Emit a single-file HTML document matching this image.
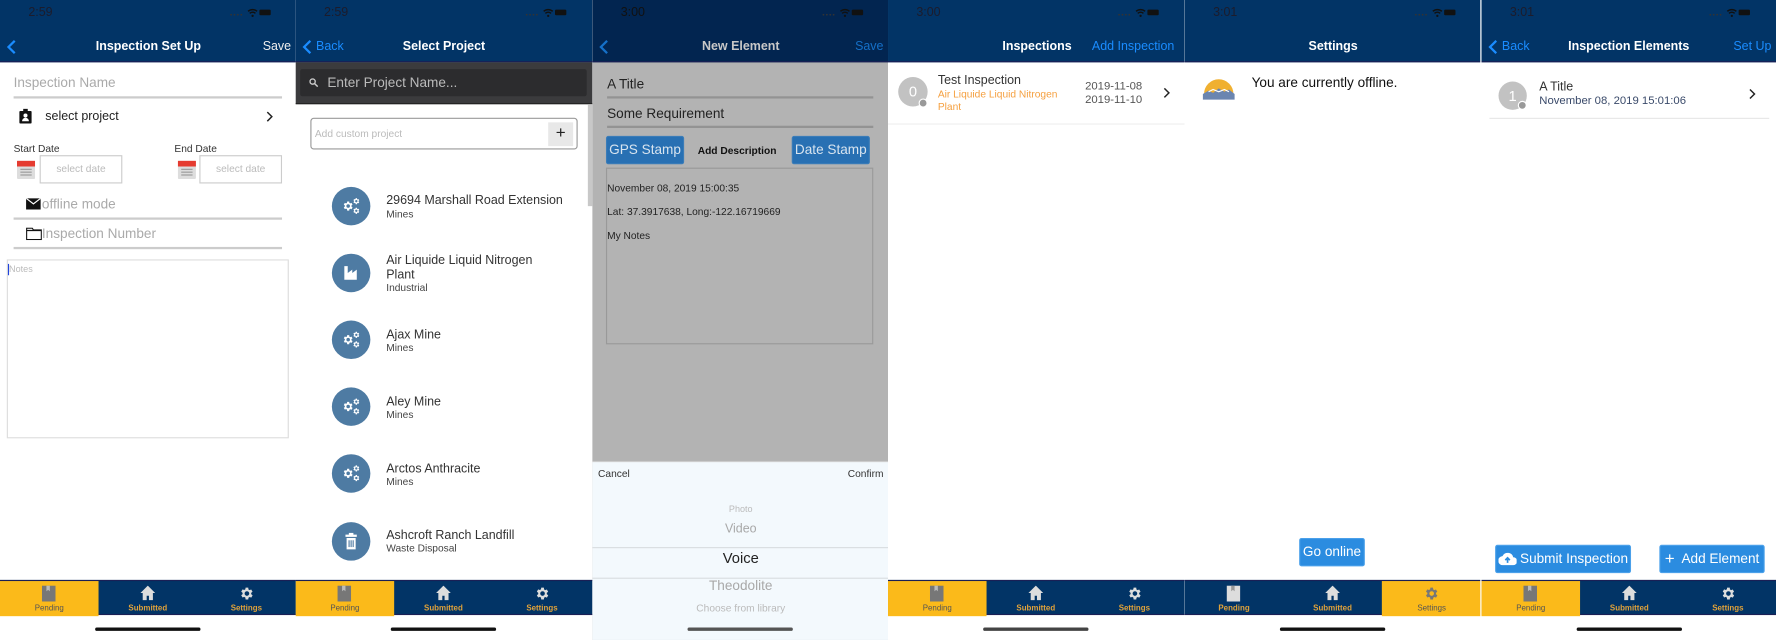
<!DOCTYPE html>
<html><head><meta charset="utf-8">
<style>
*{margin:0;padding:0;box-sizing:border-box}
html,body{width:1776px;height:640px;overflow:hidden;background:#fff}
#w{position:absolute;left:0;top:0;width:1568px;height:565px;transform:scale(1.13266);transform-origin:0 0;font-family:"Liberation Sans",sans-serif;}
.p{position:absolute;top:0;width:262px;height:565px;overflow:hidden;background:#fff}
.a{position:absolute;white-space:nowrap}
.hd{position:absolute;left:0;top:0;width:100%;height:55px;background:#023466;border-bottom:1.5px solid #1a1f55}
.tm{position:absolute;left:25px;top:5px;font-size:11px;color:#1c1c2c}
.sig{position:absolute;right:22px;top:7px;width:38px;height:8px}
.tt{position:absolute;top:35px;font-size:11px;font-weight:bold;color:#fff;width:100%;text-align:center;left:0}
.bl{color:#1a8cff;font-size:11px;position:absolute;top:35px}
.tab{position:absolute;left:0;top:512px;width:100%;height:31px;background:#023466;border-top:1px solid #1a1f55;border-bottom:1px solid #1a1f55}
.ti{position:absolute;top:0;width:87px;height:31px;text-align:center}
.ti svg{position:absolute;left:37px;top:4px}
.ti span{position:absolute;left:0;right:0;top:21px;font-size:7px;font-weight:bold;color:#e0a23a}
.ti.on{background:#fbba1a}
.ti.on span{color:#555;font-weight:normal}
.hi{position:absolute;top:554px;left:84px;width:93px;height:3px;border-radius:2px;background:#111}
.ci{position:absolute;width:34px;height:34px;border-radius:50%;background:#4e7ba3;left:32px}
.ci svg{position:absolute;left:9px;top:9px}
.t1{position:absolute;left:80px;font-size:11px;color:#333}
.t2{position:absolute;left:80px;font-size:9px;color:#444}
.btn{position:absolute;background:#2b8ce0;color:#fff;font-size:12px;border-radius:2px;text-align:center;border:1px solid #4aa0ea}
</style></head><body><div id="w">
<svg width="0" height="0" style="position:absolute"><defs>
<path id="g" d="M19.4 13a7.5 7.5 0 0 0 0-2l2.1-1.6-2-3.5-2.5 1a7.5 7.5 0 0 0-1.7-1L15 3h-4l-.4 2.7a7.5 7.5 0 0 0-1.7 1l-2.5-1-2 3.5L6.5 11a7.5 7.5 0 0 0 0 2l-2.1 1.6 2 3.5 2.5-1a7.5 7.5 0 0 0 1.7 1L11 21h4l.4-2.7a7.5 7.5 0 0 0 1.7-1l2.5 1 2-3.5zM13 15.5a3.5 3.5 0 1 1 0-7 3.5 3.5 0 0 1 0 7z" transform="translate(-1 0)"/>
</defs></svg>

<!-- PANEL 1 -->
<div class="p" style="left:0">
 <div class="hd"><div class="tm">2:59</div>
  <svg class="sig" viewBox="0 0 38 8"><circle cx="2" cy="6" r=".8" fill="#333"/><circle cx="5" cy="6" r=".8" fill="#333"/><circle cx="8" cy="6" r=".8" fill="#333"/><circle cx="11" cy="6" r=".8" fill="#333"/><path d="M17 3a6 6 0 0 1 8 0M18.5 4.8a3.5 3.5 0 0 1 5 0" stroke="#111" stroke-width="1.3" fill="none"/><circle cx="21" cy="7" r="1" fill="#111"/><rect x="27" y="1.5" width="10" height="5" rx="1" fill="#111"/></svg>
  <svg class="a" style="left:6px;top:35px" width="8" height="13" viewBox="0 0 8 13"><path d="M7 1L1.5 6.5 7 12" stroke="#1a8cff" stroke-width="2" fill="none"/></svg>
  <div class="tt">Inspection Set Up</div>
  <div class="a" style="right:5px;top:35px;font-size:11px;color:#eee">Save</div>
 </div>
 <div class="a" style="left:12px;top:66px;font-size:12px;color:#aaa">Inspection Name</div>
 <div class="a" style="left:12px;top:85px;width:237px;height:1.5px;background:#ccc"></div>
 <svg class="a" style="left:17px;top:96px" width="11" height="13" viewBox="0 0 11 13"><rect x="0" y="2" width="11" height="11" rx="1" fill="#111"/><rect x="3.5" y="0" width="4" height="3" fill="#111"/><circle cx="5.5" cy="6" r="1.8" fill="#fff"/><path d="M2.5 11a3 3 0 0 1 6 0z" fill="#fff"/></svg>
 <div class="a" style="left:40px;top:97px;font-size:11px;color:#222">select project</div>
 <svg class="a" style="left:235px;top:98px" width="6" height="10" viewBox="0 0 6 10"><path d="M1 1l4 4-4 4" stroke="#222" stroke-width="1.3" fill="none"/></svg>
 <div class="a" style="left:12px;top:126px;font-size:9px;color:#333">Start Date</div>
 <div class="a" style="left:154px;top:126px;font-size:9px;color:#333">End Date</div>
 <svg class="a" style="left:15px;top:140px" width="16" height="18" viewBox="0 0 16 18"><rect x="0" y="2" width="16" height="16" rx="1" fill="#ddd"/><rect x="0" y="2" width="16" height="5" fill="#e53b30"/><g fill="#999"><rect x="3" y="9" width="10" height="1"/><rect x="3" y="11.5" width="10" height="1"/><rect x="3" y="14" width="10" height="1"/></g></svg>
 <div class="a" style="left:35px;top:137px;width:73px;height:25px;border:1px solid #ccc;font-size:9px;color:#bbb;text-align:center;line-height:23px">select date</div>
 <svg class="a" style="left:157px;top:140px" width="16" height="18" viewBox="0 0 16 18"><rect x="0" y="2" width="16" height="16" rx="1" fill="#ddd"/><rect x="0" y="2" width="16" height="5" fill="#e53b30"/><g fill="#999"><rect x="3" y="9" width="10" height="1"/><rect x="3" y="11.5" width="10" height="1"/><rect x="3" y="14" width="10" height="1"/></g></svg>
 <div class="a" style="left:176px;top:137px;width:73px;height:25px;border:1px solid #ccc;font-size:9px;color:#bbb;text-align:center;line-height:23px">select date</div>
 <svg class="a" style="left:23px;top:175px" width="13" height="10" viewBox="0 0 13 10"><rect width="13" height="10" fill="#111"/><path d="M0 0l6.5 5L13 0" stroke="#fff" stroke-width="1" fill="none"/></svg>
 <div class="a" style="left:37px;top:173px;font-size:12px;color:#aaa">offline mode</div>
 <div class="a" style="left:12px;top:192px;width:237px;height:1.5px;background:#ccc"></div>
 <svg class="a" style="left:23px;top:201px" width="14" height="11" viewBox="0 0 14 11"><path d="M.5 .5h5l1 1.5h7v8.5H.5z" stroke="#111" stroke-width="1" fill="none"/><path d="M.5 2.5h13" stroke="#111"/></svg>
 <div class="a" style="left:37px;top:199px;font-size:12px;color:#aaa">Inspection Number</div>
 <div class="a" style="left:12px;top:218px;width:237px;height:1.5px;background:#ccc"></div>
 <div class="a" style="left:6px;top:229px;width:249px;height:158px;border:1px solid #ddd"></div>
 <div class="a" style="left:7px;top:233px;width:1px;height:10px;background:#2244dd"></div>
 <div class="a" style="left:8px;top:233px;font-size:8px;color:#bbb">Notes</div>
 <div class="tab">
  <div class="ti on" style="left:0"><svg width="12" height="14" viewBox="0 0 12 14"><path d="M0 0h12v14H0z" fill="#777"/><path d="M4 0v5l1.5-1.2L7 5V0" fill="#bbb"/></svg><span>Pending</span></div>
  <div class="ti" style="left:87px"><svg width="13" height="13" viewBox="0 0 13 13"><path d="M6.5 0L0 6.5h2V13h3.5V9h2v4H11V6.5h2z" fill="#ddd"/></svg><span>Submitted</span></div>
  <div class="ti" style="left:174px"><svg width="14" height="14" viewBox="0 0 24 24"><use href="#g" fill="#ddd"/></svg><span>Settings</span></div>
 </div>
 <div class="hi"></div>
</div>

<!-- PANEL 2 -->
<div class="p" style="left:261px">
 <div class="hd"><div class="tm">2:59</div>
  <svg class="sig" viewBox="0 0 38 8"><circle cx="2" cy="6" r=".8" fill="#333"/><circle cx="5" cy="6" r=".8" fill="#333"/><circle cx="8" cy="6" r=".8" fill="#333"/><circle cx="11" cy="6" r=".8" fill="#333"/><path d="M17 3a6 6 0 0 1 8 0M18.5 4.8a3.5 3.5 0 0 1 5 0" stroke="#111" stroke-width="1.3" fill="none"/><circle cx="21" cy="7" r="1" fill="#111"/><rect x="27" y="1.5" width="10" height="5" rx="1" fill="#111"/></svg>
  <svg class="a" style="left:6px;top:35px" width="8" height="13" viewBox="0 0 8 13"><path d="M7 1L1.5 6.5 7 12" stroke="#1a8cff" stroke-width="2" fill="none"/></svg>
  <div class="bl" style="left:18px">Back</div>
  <div class="tt">Select Project</div>
 </div>
 <div class="a" style="left:0;top:55px;width:262px;height:37px;background:#3b3b3d;border-bottom:1px solid #222"></div>
 <div class="a" style="left:4px;top:61px;width:253px;height:24px;background:#2c2c2e;border-radius:2px"></div>
 <svg class="a" style="left:12px;top:69px" width="8" height="8" viewBox="0 0 8 8"><circle cx="3" cy="3" r="2.3" stroke="#ccc" stroke-width="1.2" fill="none"/><path d="M4.8 4.8L7.5 7.5" stroke="#ccc" stroke-width="1.3"/></svg>
 <div class="a" style="left:28px;top:66px;font-size:12px;color:#bbb">Enter Project Name...</div>
 <div class="a" style="left:258px;top:92px;width:4px;height:90px;background:#c8c8c8"></div>
 <div class="a" style="left:13px;top:104px;width:236px;height:28px;border:1.5px solid #999;border-radius:3px"></div>
 <div class="a" style="left:17px;top:113px;font-size:9px;color:#bbb">Add custom project</div>
 <div class="a" style="left:223px;top:108px;width:22px;height:21px;background:#e8e8e8;text-align:center;font-size:15px;line-height:20px;color:#222">+</div>
 <div class="ci" style="top:165px"><svg width="16" height="16" viewBox="0 0 16 16" fill="#fff"><use href="#g" transform="translate(0 2.5) scale(.45)"/><use href="#g" transform="translate(9 0) scale(.3)"/><use href="#g" transform="translate(9 8.5) scale(.3)"/></svg></div>
 <div class="t1" style="top:171px">29694 Marshall Road Extension</div><div class="t2" style="top:184px">Mines</div>
 <div class="ci" style="top:224px"><svg width="16" height="16" viewBox="0 0 16 16" fill="#fff"><path d="M2 2h3v6l4-3v3l4-3v9H2z"/></svg></div>
 <div class="t1" style="top:224px">Air Liquide Liquid Nitrogen</div><div class="t1" style="top:237px">Plant</div><div class="t2" style="top:249px">Industrial</div>
 <div class="ci" style="top:283px"><svg width="16" height="16" viewBox="0 0 16 16" fill="#fff"><use href="#g" transform="translate(0 2.5) scale(.45)"/><use href="#g" transform="translate(9 0) scale(.3)"/><use href="#g" transform="translate(9 8.5) scale(.3)"/></svg></div>
 <div class="t1" style="top:290px">Ajax Mine</div><div class="t2" style="top:302px">Mines</div>
 <div class="ci" style="top:342px"><svg width="16" height="16" viewBox="0 0 16 16" fill="#fff"><use href="#g" transform="translate(0 2.5) scale(.45)"/><use href="#g" transform="translate(9 0) scale(.3)"/><use href="#g" transform="translate(9 8.5) scale(.3)"/></svg></div>
 <div class="t1" style="top:349px">Aley Mine</div><div class="t2" style="top:361px">Mines</div>
 <div class="ci" style="top:401px"><svg width="16" height="16" viewBox="0 0 16 16" fill="#fff"><use href="#g" transform="translate(0 2.5) scale(.45)"/><use href="#g" transform="translate(9 0) scale(.3)"/><use href="#g" transform="translate(9 8.5) scale(.3)"/></svg></div>
 <div class="t1" style="top:408px">Arctos Anthracite</div><div class="t2" style="top:420px">Mines</div>
 <div class="ci" style="top:461px"><svg width="16" height="16" viewBox="0 0 16 16" fill="#fff"><rect x="3" y="2" width="10" height="2"/><rect x="6" y="0.5" width="4" height="2"/><path d="M4 5h8v10H4z"/><g fill="#4e7ba3"><rect x="5.7" y="7" width="1" height="6"/><rect x="7.5" y="7" width="1" height="6"/><rect x="9.3" y="7" width="1" height="6"/></g></svg></div>
 <div class="t1" style="top:467px">Ashcroft Ranch Landfill</div><div class="t2" style="top:479px">Waste Disposal</div>
 <div class="tab">
  <div class="ti on" style="left:0"><svg width="12" height="14" viewBox="0 0 12 14"><path d="M0 0h12v14H0z" fill="#777"/><path d="M4 0v5l1.5-1.2L7 5V0" fill="#bbb"/></svg><span>Pending</span></div>
  <div class="ti" style="left:87px"><svg width="13" height="13" viewBox="0 0 13 13"><path d="M6.5 0L0 6.5h2V13h3.5V9h2v4H11V6.5h2z" fill="#ddd"/></svg><span>Submitted</span></div>
  <div class="ti" style="left:174px"><svg width="14" height="14" viewBox="0 0 24 24"><use href="#g" fill="#ddd"/></svg><span>Settings</span></div>
 </div>
 <div class="hi"></div>
</div>

<!-- PANEL 3 -->
<div class="p" style="left:523px;background:#b3b3b3">
 <div class="hd" style="background:#022550"><div class="tm" style="color:#111">3:00</div>
  <svg class="sig" viewBox="0 0 38 8"><circle cx="2" cy="6" r=".8" fill="#333"/><circle cx="5" cy="6" r=".8" fill="#333"/><circle cx="8" cy="6" r=".8" fill="#333"/><circle cx="11" cy="6" r=".8" fill="#333"/><path d="M17 3a6 6 0 0 1 8 0M18.5 4.8a3.5 3.5 0 0 1 5 0" stroke="#111" stroke-width="1.3" fill="none"/><circle cx="21" cy="7" r="1" fill="#111"/><rect x="27" y="1.5" width="10" height="5" rx="1" fill="#111"/></svg>
  <svg class="a" style="left:6px;top:35px" width="8" height="13" viewBox="0 0 8 13"><path d="M7 1L1.5 6.5 7 12" stroke="#1570c8" stroke-width="2" fill="none"/></svg>
  <div class="tt" style="color:#c8c8c8">New Element</div>
  <div class="a" style="right:5px;top:35px;font-size:11px;color:#1570c8">Save</div>
 </div>
 <div class="a" style="left:13px;top:67px;font-size:12px;color:#222">A Title</div>
 <div class="a" style="left:13px;top:85px;width:235px;height:1.5px;background:#939393"></div>
 <div class="a" style="left:13px;top:93px;font-size:12px;color:#222">Some Requirement</div>
 <div class="a" style="left:13px;top:111px;width:235px;height:1.5px;background:#939393"></div>
 <div class="btn" style="left:12px;top:120px;width:69px;height:25px;line-height:23px;background:#2870b3;border-color:#3a7cb8;color:#d8e4ef">GPS Stamp</div>
 <div class="a" style="left:93px;top:128px;font-size:9px;font-weight:bold;color:#111">Add Description</div>
 <div class="btn" style="left:176px;top:120px;width:69px;height:25px;line-height:23px;background:#2870b3;border-color:#3a7cb8;color:#d8e4ef">Date Stamp</div>
 <div class="a" style="left:12px;top:148px;width:236px;height:156px;border:1px solid #999"></div>
 <div class="a" style="left:13px;top:161px;font-size:9px;color:#222">November 08, 2019 15:00:35</div>
 <div class="a" style="left:13px;top:182px;font-size:9px;color:#222">Lat: 37.3917638, Long:-122.16719669</div>
 <div class="a" style="left:13px;top:203px;font-size:9px;color:#222">My Notes</div>
 <div class="a" style="left:0;top:512px;width:4px;height:31px;background:#023466"></div>
 <div class="a" style="left:0;top:407px;width:262px;height:158px;background:#f3f9fd;border-top:1px solid #ccc"></div>
 <div class="a" style="left:5px;top:413px;font-size:9px;color:#333">Cancel</div>
 <div class="a" style="right:5px;top:413px;font-size:9px;color:#333">Confirm</div>
 <div class="a" style="left:0;width:262px;top:445px;text-align:center;font-size:8px;color:#bbb">Photo</div>
 <div class="a" style="left:0;width:262px;top:461px;text-align:center;font-size:11px;color:#a8a8a8">Video</div>
 <div class="a" style="left:0;top:483px;width:262px;height:1px;background:#d8dde0"></div>
 <div class="a" style="left:0;width:262px;top:485px;text-align:center;font-size:13px;color:#222">Voice</div>
 <div class="a" style="left:0;top:510px;width:262px;height:1px;background:#d8dde0"></div>
 <div class="a" style="left:0;width:262px;top:510px;text-align:center;font-size:12px;color:#a8a8a8">Theodolite</div>
 <div class="a" style="left:0;width:262px;top:532px;text-align:center;font-size:9px;color:#bbb">Choose from library</div>
 <div class="hi" style="background:#555"></div>
</div>

<!-- PANEL 4 -->
<div class="p" style="left:784px">
 <div class="hd"><div class="tm">3:00</div>
  <svg class="sig" viewBox="0 0 38 8"><circle cx="2" cy="6" r=".8" fill="#333"/><circle cx="5" cy="6" r=".8" fill="#333"/><circle cx="8" cy="6" r=".8" fill="#333"/><circle cx="11" cy="6" r=".8" fill="#333"/><path d="M17 3a6 6 0 0 1 8 0M18.5 4.8a3.5 3.5 0 0 1 5 0" stroke="#111" stroke-width="1.3" fill="none"/><circle cx="21" cy="7" r="1" fill="#111"/><rect x="27" y="1.5" width="10" height="5" rx="1" fill="#111"/></svg>
  <div class="a" style="left:101px;top:35px;font-size:11px;font-weight:bold;color:#fff">Inspections</div>
  <div class="bl" style="left:180px;top:35px">Add Inspection</div>
 </div>
 <div class="a" style="left:9px;top:68px;width:26px;height:26px;border-radius:50%;background:#c2c2c2;color:#fff;font-size:13px;text-align:center;line-height:26px">0</div>
 <div class="a" style="left:27px;top:87px;width:8px;height:8px;border-radius:50%;background:#999;border:1px solid #fff"></div>
 <div class="a" style="left:44px;top:65px;font-size:11px;color:#333">Test Inspection</div>
 <div class="a" style="left:44px;top:78px;font-size:9px;color:#f5a040">Air Liquide Liquid Nitrogen</div>
 <div class="a" style="left:44px;top:89px;font-size:9px;color:#f5a040">Plant</div>
 <div class="a" style="left:174px;top:71px;font-size:10px;color:#555">2019-11-08</div>
 <div class="a" style="left:174px;top:83px;font-size:10px;color:#555">2019-11-10</div>
 <svg class="a" style="left:243px;top:77px" width="6" height="10" viewBox="0 0 6 10"><path d="M1 1l4 4-4 4" stroke="#222" stroke-width="1.3" fill="none"/></svg>
 <div class="a" style="left:0;top:109px;width:262px;height:1px;background:#eee"></div>
 <div class="tab">
  <div class="ti on" style="left:0"><svg width="12" height="14" viewBox="0 0 12 14"><path d="M0 0h12v14H0z" fill="#777"/><path d="M4 0v5l1.5-1.2L7 5V0" fill="#bbb"/></svg><span>Pending</span></div>
  <div class="ti" style="left:87px"><svg width="13" height="13" viewBox="0 0 13 13"><path d="M6.5 0L0 6.5h2V13h3.5V9h2v4H11V6.5h2z" fill="#ddd"/></svg><span>Submitted</span></div>
  <div class="ti" style="left:174px"><svg width="14" height="14" viewBox="0 0 24 24"><use href="#g" fill="#ddd"/></svg><span>Settings</span></div>
 </div>
 <div class="hi" style="background:#444"></div>
</div>

<!-- PANEL 5 -->
<div class="p" style="left:1046px">
 <div class="hd"><div class="tm">3:01</div>
  <svg class="sig" viewBox="0 0 38 8"><circle cx="2" cy="6" r=".8" fill="#333"/><circle cx="5" cy="6" r=".8" fill="#333"/><circle cx="8" cy="6" r=".8" fill="#333"/><circle cx="11" cy="6" r=".8" fill="#333"/><path d="M17 3a6 6 0 0 1 8 0M18.5 4.8a3.5 3.5 0 0 1 5 0" stroke="#111" stroke-width="1.3" fill="none"/><circle cx="21" cy="7" r="1" fill="#111"/><rect x="27" y="1.5" width="10" height="5" rx="1" fill="#111"/></svg>
  <div class="tt">Settings</div>
 </div>
 <svg class="a" style="left:15px;top:69px" width="30" height="20" viewBox="0 0 30 20"><path d="M2 14A13 13 0 0 1 28 14z" fill="#f0b030"/><path d="M1 14l5-3 4 2 5-4 5 3 4-2 5 4v5H1z" fill="#6a85b0"/><path d="M6 12l4-2 5 2 5-2 4 2" stroke="#fff" stroke-width="1" fill="none"/></svg>
 <div class="a" style="left:59px;top:66px;font-size:12px;color:#111">You are currently offline.</div>
 <div class="btn" style="left:101px;top:475px;width:58px;height:25px;line-height:23px">Go online</div>
 <div class="tab">
  <div class="ti" style="left:0"><svg width="12" height="14" viewBox="0 0 12 14"><path d="M0 0h12v14H0z" fill="#ddd"/><path d="M4 0v5l1.5-1.2L7 5V0" fill="#999"/></svg><span>Pending</span></div>
  <div class="ti" style="left:87px"><svg width="13" height="13" viewBox="0 0 13 13"><path d="M6.5 0L0 6.5h2V13h3.5V9h2v4H11V6.5h2z" fill="#ddd"/></svg><span>Submitted</span></div>
  <div class="ti on" style="left:174px;width:88px"><svg width="14" height="14" viewBox="0 0 24 24"><use href="#g" fill="#777"/></svg><span>Settings</span></div>
 </div>
 <div class="hi"></div>
</div>

<!-- PANEL 6 -->
<div class="p" style="left:1307px;width:261px;border-left:1px solid #fff">
 <div class="hd"><div class="tm">3:01</div>
  <svg class="sig" viewBox="0 0 38 8"><circle cx="2" cy="6" r=".8" fill="#333"/><circle cx="5" cy="6" r=".8" fill="#333"/><circle cx="8" cy="6" r=".8" fill="#333"/><circle cx="11" cy="6" r=".8" fill="#333"/><path d="M17 3a6 6 0 0 1 8 0M18.5 4.8a3.5 3.5 0 0 1 5 0" stroke="#111" stroke-width="1.3" fill="none"/><circle cx="21" cy="7" r="1" fill="#111"/><rect x="27" y="1.5" width="10" height="5" rx="1" fill="#111"/></svg>
  <svg class="a" style="left:6px;top:35px" width="8" height="13" viewBox="0 0 8 13"><path d="M7 1L1.5 6.5 7 12" stroke="#1a8cff" stroke-width="2" fill="none"/></svg>
  <div class="bl" style="left:18px">Back</div>
  <div class="tt">Inspection Elements</div>
  <div class="bl" style="right:4px">Set Up</div>
 </div>
 <div class="a" style="left:15px;top:72px;width:25px;height:25px;border-radius:50%;background:#c2c2c2;color:#fff;font-size:13px;text-align:center;line-height:25px">1</div>
 <div class="a" style="left:32px;top:89px;width:8px;height:8px;border-radius:50%;background:#999;border:1px solid #fff"></div>
 <div class="a" style="left:51px;top:71px;font-size:11px;color:#333">A Title</div>
 <div class="a" style="left:51px;top:84px;font-size:10px;color:#3a4a6a">November 08, 2019 15:01:06</div>
 <svg class="a" style="left:236px;top:78px" width="6" height="10" viewBox="0 0 6 10"><path d="M1 1l4 4-4 4" stroke="#222" stroke-width="1.3" fill="none"/></svg>
 <div class="a" style="left:7px;top:104px;width:247px;height:1px;background:#e6e6e6"></div>
 <div class="btn" style="left:12px;top:481px;width:120px;height:25px;line-height:23px"><svg style="vertical-align:-2px" width="16" height="11" viewBox="0 0 16 11"><path d="M4 11a4 4 0 0 1-.5-8A5 5 0 0 1 13 4a3.5 3.5 0 0 1 0 7z" fill="#fff"/><path d="M8 9V5M6 6.5L8 4.5l2 2" stroke="#2b8ce0" stroke-width="1.5" fill="none"/></svg> Submit Inspection</div>
 <div class="btn" style="left:157px;top:481px;width:93px;height:25px;line-height:23px"><span style="font-size:15px;vertical-align:-1px">+</span>&nbsp; Add Element</div>
 <div class="tab">
  <div class="ti on" style="left:0"><svg width="12" height="14" viewBox="0 0 12 14"><path d="M0 0h12v14H0z" fill="#777"/><path d="M4 0v5l1.5-1.2L7 5V0" fill="#bbb"/></svg><span>Pending</span></div>
  <div class="ti" style="left:87px"><svg width="13" height="13" viewBox="0 0 13 13"><path d="M6.5 0L0 6.5h2V13h3.5V9h2v4H11V6.5h2z" fill="#ddd"/></svg><span>Submitted</span></div>
  <div class="ti" style="left:174px"><svg width="14" height="14" viewBox="0 0 24 24"><use href="#g" fill="#ddd"/></svg><span>Settings</span></div>
 </div>
 <div class="hi"></div>
</div>

</div></body></html>
